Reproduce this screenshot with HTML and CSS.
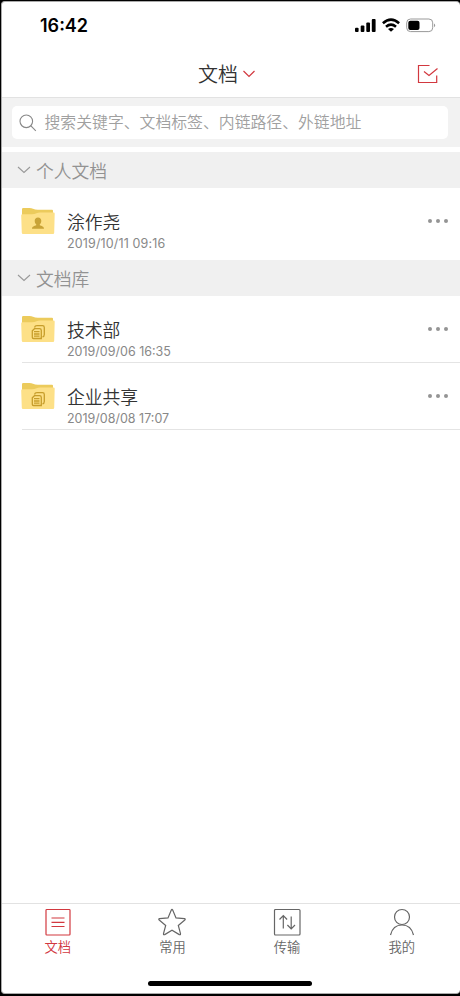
FILE: index.html
```html
<!DOCTYPE html>
<html lang="zh-CN">
<head>
<meta charset="utf-8">
<title>文档</title>
<link rel="stylesheet" href="styles.css">
</head>
<body>
<svg width="0" height="0" class="defs">
  <defs>
    <symbol id="folder" viewBox="0 0 34 28">
      <path d="M1 2.200Q1 1 2.200 1H8.500Q10.500 1 12 1.700Q14 2.700 17 2.700H31Q32 2.700 32 3.700V12H1Z" fill="#eccb5c"/>
      <path d="M.2 8.500Q.2 7.300 1.400 7.300H11Q13.500 7.300 15.500 6.300Q17 5.500 19 5.500H32.600Q33.800 5.500 33.700 6.800L33.200 25.800Q33.200 27 32 27H2Q.9 27 .8 25.800Z" fill="#fde087"/>
    </symbol>
    <symbol id="docs" viewBox="0 0 34 28">
      <g fill="none" stroke="#c79d2b" stroke-width="1.300">
        <path d="M13.500 12.500Q14 10.700 16 10.700H21.500Q23.300 10.700 23.300 12.500V19.500Q23.300 21.500 21.500 21.800"/>
        <path d="M13.500 13.700H18.500Q20.300 13.700 20.300 15.500V23.500H12.500Q11.300 23.500 11.300 22.300V15.800ZM13 16.700h5.500M13 19h5.500M13 21.200h5.500"/>
      </g>
    </symbol>
  </defs>
</svg>
<div class="screen">
  <div class="status">
    <span class="time">16:42</span>
    <svg class="signals" width="82" height="16" viewBox="0 0 82 16">
      <g><rect x="0" y="9.800" width="3.600" height="4.200" rx="1"/><rect x="5.700" y="7.500" width="3.700" height="6.500" rx="1"/><rect x="11.300" y="4.500" width="3.700" height="9.500" rx="1"/><rect x="16.800" y="1" width="3.800" height="13" rx="1"/></g>
      <g fill="none" stroke="#000" stroke-width="2.600"><path d="M27.900 5.200Q36 -1.800 44.100 5.200"/><path d="M31 8.800Q36 4.600 41 8.800"/></g>
      <path d="M33 11Q36 8.800 39 11L36 13.800Z"/>
      <rect x="51.700" y="1" width="26" height="12.600" rx="3.800" fill="none" stroke="#999"/>
      <rect x="53.300" y="2.700" width="11.200" height="9.300" rx="2"/>
      <path d="M79 5.500Q81.500 7.300 79 9.200Z" fill="#999"/>
    </svg>
  </div>
  <header class="header">
    <h1>文档</h1>
    <svg class="chev" width="14" height="10" viewBox="0 0 14 10"><path d="M1.500 2L7 7.500L12.500 2"/></svg>
    <svg class="select" width="22" height="20" viewBox="0 0 22 20"><path d="M12.500 1.500H1.500V18.500H19.700V11.500M7 7.500L12 11.500L20.500 4.500"/></svg>
  </header>
  <div class="searchbar">
    <div class="search">
      <svg width="18" height="18" viewBox="0 0 18 18"><circle cx="7.300" cy="7.300" r="6.300"/><path d="M11.700 11.700L16.800 16.800"/></svg>
      <span>搜索关键字、文档标签、内链路径、外链地址</span>
    </div>
  </div>
  <main>
    <h2 class="section"><svg width="14" height="10" viewBox="0 0 14 10"><path d="M1 2L7 7.500L13 2"/></svg><span>个人文档</span></h2>
    <div class="row tall">
      <svg class="folder" width="34" height="28" viewBox="0 0 34 28"><use href="#folder"/><path d="M17 10.500C19 10.500 20.300 11.800 20.300 13.700C20.300 15.500 19.600 16.500 18.800 17.300V18.200C20.500 19 23 19.200 23 21.800H11C11 19.200 13.500 19 15.200 18.200V17.300C14.400 16.500 13.700 15.500 13.700 13.700C13.700 11.800 15 10.500 17 10.500Z" fill="#c9a337"/></svg>
      <div class="info"><div class="name">涂作尧</div><div class="date wide">2019/10/11 09:16</div></div>
      <div class="more"><i></i><i></i><i></i></div>
    </div>
    <h2 class="section"><svg width="14" height="10" viewBox="0 0 14 10"><path d="M1 2L7 7.500L13 2"/></svg><span>文档库</span></h2>
    <div class="row lined">
      <svg class="folder" width="34" height="28" viewBox="0 0 34 28"><use href="#folder"/><use href="#docs"/></svg>
      <div class="info"><div class="name">技术部</div><div class="date">2019/09/06 16:35</div></div>
      <div class="more"><i></i><i></i><i></i></div>
    </div>
    <div class="row lined">
      <svg class="folder" width="34" height="28" viewBox="0 0 34 28"><use href="#folder"/><use href="#docs"/></svg>
      <div class="info"><div class="name">企业共享</div><div class="date">2019/08/08 17:07</div></div>
      <div class="more"><i></i><i></i><i></i></div>
    </div>
  </main>
  <nav class="tabs">
    <a class="tab active"><svg width="28" height="28" viewBox="0 0 28 28"><rect x="2" y="1.500" width="24" height="25.500" rx=".8"/><path d="M7.500 10H20.500M7.500 14.300H20.500M7.500 18.500H20.500"/></svg>文档</a>
    <a class="tab"><svg width="28" height="28" viewBox="0 0 28 28"><path d="M13.300 2.100Q14 .8 14.700 2.100L18 9.900L26.400 10.700Q27.800 11 26.800 12L20.300 17.500L22.500 25.700Q22.600 27.200 21.300 26.600L14 22.200L6.700 26.600Q5.400 27.200 5.500 25.700L7.700 17.500L1.200 12Q.2 11 1.600 10.700L10 9.900Z"/></svg>常用</a>
    <a class="tab"><svg width="28" height="28" viewBox="0 0 28 28"><rect x="1.500" y="1.500" width="25.500" height="25.500" rx="1"/><path d="M10.300 20.500V7.500M6.500 11.500L10.300 7.500L14.100 11.500M18.200 8.500V21M14.400 17L18.200 21L22 17"/></svg>传输</a>
    <a class="tab"><svg width="28" height="28" viewBox="0 0 28 28"><circle cx="14" cy="9" r="7.500"/><path d="M2.500 27C4 20.500 8.200 17 14 17S24 20.500 25.500 27"/></svg>我的</a>
  </nav>
  <div class="home"></div>
</div>
</body>
</html>
```
FILE: styles.css
```css
* { box-sizing: border-box; }
body {
  margin: 0;
  height: 996px;
  padding: 1px 0 2px 1px;
  background: #000;
  font-family: Inter, "Noto Sans CJK SC", sans-serif;
}
.defs { position: absolute; }
.screen {
  height: 993px;
  display: flex;
  flex-direction: column;
  background: #fff;
  border: solid #aaa;
  border-width: 1px 0 1px 1px;
  border-radius: 4px;
  overflow: hidden;
}
svg { flex: none; }
.status {
  height: 48px;
  display: flex;
  justify-content: space-between;
  padding: 14px 23px 0 38px;
}
.time { font-size: 18px; line-height: 20px; font-weight: 600; }
.signals { margin-top: 2px; }
.header {
  height: 48px;
  display: grid;
  grid-template-columns: 236px 14px 1fr;
  column-gap: 4px;
  align-items: center;
  border-bottom: 1px solid #e2e2e2;
  padding-right: 21px;
}
h1 {
  margin: 0;
  padding-top: 3px;
  font-size: 20px;
  line-height: 24px;
  font-weight: 350;
  color: #333;
  text-align: right;
}
.chev, .select { fill: none; stroke: #d2383f; stroke-width: 1.200; }
.select { justify-self: end; }
.searchbar { height: 49px; padding: 8px 12px 8px 10px; background: #f2f2f2; }
.search {
  height: 33px;
  display: flex;
  align-items: center;
  gap: 7.500px;
  padding-left: 7px;
  background: #fff;
  border-radius: 5px;
  font-size: 15.850px;
  line-height: 22px;
  font-weight: 350;
  color: #a0a0a0;
  white-space: nowrap;
}
.search span { padding-top: 1px; }
.search svg { fill: none; stroke: #888; stroke-width: 1.100; }
main { flex: 1; padding-top: 5px; }
.section {
  height: 36px;
  margin: 0;
  padding-left: 15px;
  display: flex;
  align-items: center;
  gap: 5px;
  background: #f0f0f0;
  font-size: 17.800px;
  line-height: 26px;
  font-weight: 350;
  color: #929292;
}
.section span { padding-top: 3px; }
.section svg { fill: none; stroke: #999; stroke-width: 1.100; }
.row {
  height: 67px;
  margin-left: 20px;
  padding: 18px 12px 0 0;
  display: flex;
  align-items: flex-start;
}
.tall { height: 72px; }
.lined { border-bottom: 1px solid #e4e4e4; }
.folder { margin: 1px 12px 0 -1px; }
.info { flex: 1; }
.name { padding-top: 3px; font-size: 17.800px; line-height: 27px; color: #333; font-weight: 350; }
.date { font-size: 12.500px; line-height: 15px; color: #888; }
.wide { letter-spacing: .14px; }
.more { display: flex; gap: 4px; padding-top: 13px; }
.more i { width: 4px; height: 4px; border-radius: 50%; background: #949494; }
.tabs {
  height: 80px;
  display: flex;
  padding-right: 1px;
  margin-left: -1.500px;
  border-top: 1px solid #e2e2e2;
}
.tab {
  flex: 1;
  display: flex;
  flex-direction: column;
  align-items: center;
  padding-top: 4px;
  font-size: 13.300px;
  line-height: 20px;
  font-weight: 350;
  color: #666;
  gap: 1px;
}
.tab svg { fill: none; stroke: #666; stroke-width: 1.200; }
.active { color: #d2383f; }
.active svg { stroke: #d2383f; }
.home {
  width: 164px;
  height: 5px;
  border-radius: 3px;
  background: #000;
  margin: -2px 0 7px 146px;
}
```
